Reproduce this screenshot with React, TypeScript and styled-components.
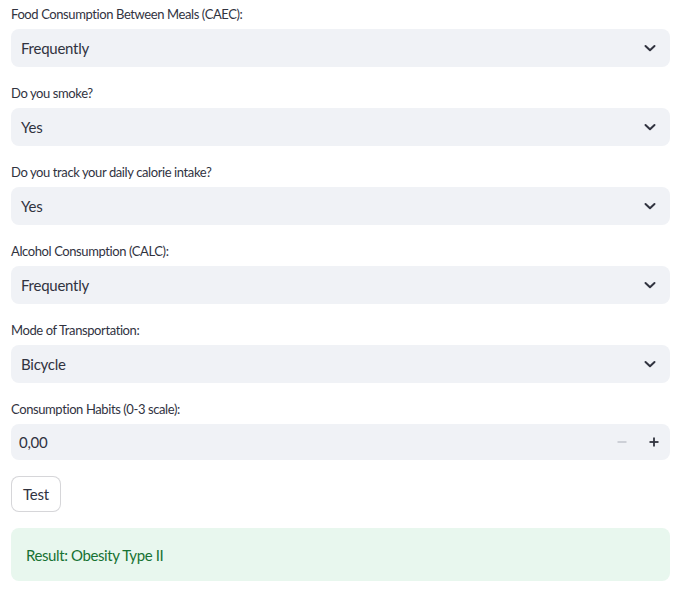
import React from "react";
import styled, { createGlobalStyle } from "styled-components";

const Global = createGlobalStyle`
  html, body { margin: 0; padding: 0; background: #ffffff; }
  body { font-family: Lato, "Noto Sans", sans-serif; color: #31333f; }
  * { box-sizing: border-box; }
`;

const Page = styled.div`
  display: flex;
  flex-direction: column;
  gap: 16px;
  padding: 4px 11px 0 11px;
`;

const Field = styled.div`
  display: flex;
  flex-direction: column;
`;

const Label = styled.label`
  font-size: 13px;
  letter-spacing: -0.4px;
  line-height: 21px;
  height: 21px;
  margin-bottom: 4px;
  color: #31333f;
`;

const SelectBox = styled.div`
  display: flex;
  align-items: center;
  justify-content: space-between;
  height: 38px;
  background: #f0f2f6;
  border-radius: 8px;
  padding: 0 12px 0 10px;
  font-size: 15px;
  letter-spacing: -0.25px;
  color: #31333f;
`;

const Chevron = () => (
  <svg width="16" height="16" viewBox="0 0 16 16" fill="none">
    <path d="M3.5 6 L8 10.3 L12.5 6" stroke="#31333f" strokeWidth="2" strokeLinecap="round" strokeLinejoin="round" />
  </svg>
);

const NumberBox = styled.div`
  display: flex;
  align-items: center;
  height: 36px;
  background: #f0f2f6;
  border-radius: 8px;
  padding-left: 8px;
  font-size: 15px;
  letter-spacing: -0.25px;
`;

const NumberValue = styled.span`
  flex: 1;
`;

const StepButton = styled.button<{ $disabled?: boolean }>`
  width: 32px;
  height: 36px;
  border: none;
  background: transparent;
  display: flex;
  align-items: center;
  justify-content: center;
  padding: 0;
  color: ${(p) => (p.$disabled ? "#c5c7cf" : "#31333f")};
`;

const Button = styled.button`
  align-self: flex-start;
  height: 36px;
  padding: 0 11px;
  background: #ffffff;
  border: 1px solid rgba(49, 51, 63, 0.2);
  border-radius: 8px;
  font-family: Lato, "Noto Sans", sans-serif;
  font-size: 15px;
  letter-spacing: -0.25px;
  color: #31333f;
`;

const Result = styled.div`
  height: 53px;
  display: flex;
  align-items: center;
  padding: 0 15px;
  background: #e8f7ee;
  border-radius: 8px;
  color: #177233;
  font-size: 15px;
  letter-spacing: -0.4px;
`;

const selects = [
  { label: "Food Consumption Between Meals (CAEC):", value: "Frequently" },
  { label: "Do you smoke?", value: "Yes" },
  { label: "Do you track your daily calorie intake?", value: "Yes" },
  { label: "Alcohol Consumption (CALC):", value: "Frequently" },
  { label: "Mode of Transportation:", value: "Bicycle" },
];

export default function App() {
  return (
    <>
      <Global />
      <Page>
        {selects.map((s) => (
          <Field key={s.label}>
            <Label>{s.label}</Label>
            <SelectBox>
              <span>{s.value}</span>
              <Chevron />
            </SelectBox>
          </Field>
        ))}
        <Field>
          <Label>Consumption Habits (0-3 scale):</Label>
          <NumberBox>
            <NumberValue>0,00</NumberValue>
            <StepButton $disabled>
              <svg width="10" height="10" viewBox="0 0 10 10">
                <rect x="0.5" y="4.2" width="9" height="1.6" fill="currentColor" />
              </svg>
            </StepButton>
            <StepButton>
              <svg width="10" height="10" viewBox="0 0 10 10">
                <rect x="0.5" y="4.1" width="9" height="1.8" fill="currentColor" />
                <rect x="4.1" y="0.5" width="1.8" height="9" fill="currentColor" />
              </svg>
            </StepButton>
          </NumberBox>
        </Field>
        <Button>Test</Button>
        <Result>Result: Obesity Type II</Result>
      </Page>
    </>
  );
}
